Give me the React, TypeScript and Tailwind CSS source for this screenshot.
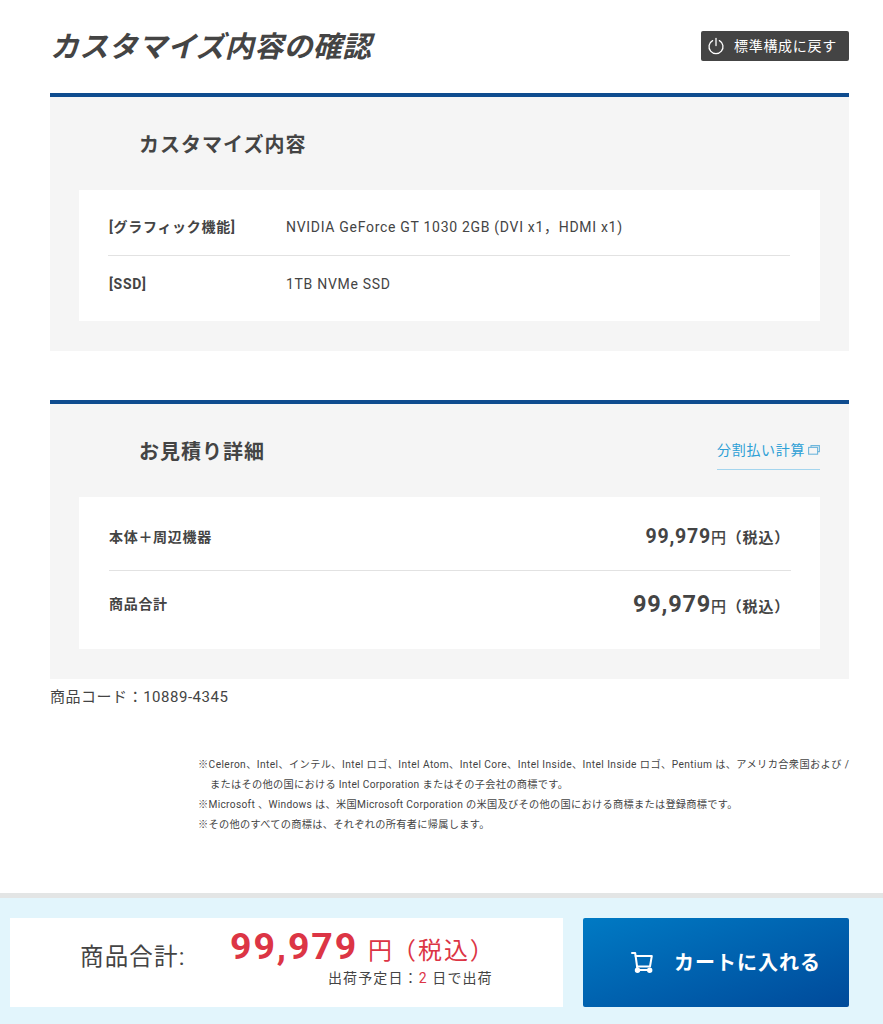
import React from "react";

function PowerIcon() {
  return (
    <svg width="18" height="18" viewBox="0 0 18 18" fill="none" stroke="#fff" strokeWidth="1.3" strokeLinecap="round">
      <path d="M5.6 3.6a7 7 0 1 0 6.8 0" />
      <path d="M9 1.5v7" />
    </svg>
  );
}

function CartIcon() {
  return (
    <svg width="22" height="21" viewBox="0 0 22 21" fill="none" stroke="#fff" strokeWidth="2" strokeLinejoin="round" strokeLinecap="round" className="shrink-0">
      <path d="M1 1h3.2l2.3 16.5" />
      <path d="M4.6 4h16.2l-1.8 10.5H6" />
      <path d="M6.5 18h12.5" />
      <circle cx="6.5" cy="18.2" r="1.7" fill="#fff" />
      <circle cx="18.7" cy="18.2" r="1.7" fill="#fff" />
    </svg>
  );
}

function WindowIcon() {
  return (
    <svg width="12" height="10" viewBox="0 0 12 10" fill="none" stroke="#6fb6dc" strokeWidth="1.1">
      <path d="M3 2.2V.6h8.4v6H9.6" />
      <rect x="0.6" y="2.4" width="9" height="6.8" />
    </svg>
  );
}

function Price({ value, big }: { value: string; big?: boolean }) {
  return (
    <div className="flex items-baseline font-bold tracking-[0.05em] text-[#444] whitespace-nowrap pt-[2px] pr-[1px]">
      <span className={big ? "text-[23.5px] leading-none" : "text-[19.5px] leading-none"}>{value}</span>
      <span className="text-[15px] font-medium">円</span>
      <span className="text-[15px] font-bold">（税込）</span>
    </div>
  );
}

export default function App() {
  return (
    <div className="w-[883px] h-[1024px] overflow-hidden bg-white text-[#444] flex flex-col font-['Roboto','Noto_Sans_CJK_JP',sans-serif]">
      <div className="pl-[50px] pr-[34px] flex flex-col">
        <div className="h-[93px] flex items-start justify-between">
          <h1 className="mt-[27px] text-[29px] leading-[40px] font-bold italic tracking-[0.01em] text-[#444]">カスタマイズ内容の確認</h1>
          <button className="mt-[31px] w-[148px] h-[30px] bg-[#444] rounded-[2px] flex items-center pl-[6px] gap-[9px] text-white text-[14px] tracking-[0.05em]">
            <PowerIcon />
            <span>標準構成に戻す</span>
          </button>
        </div>

        <section className="border-t-[4px] border-[#0f4c8f] bg-[#f5f5f5] h-[258px] px-[29px] pt-[33px]">
          <h2 className="pl-[60px] text-[20px] leading-[30px] font-bold tracking-[0.05em] h-[60px]">カスタマイズ内容</h2>
          <div className="bg-white h-[131px] pl-[29px] pr-[30px] pt-[9px]">
            <div className="h-[57px] pt-[1px] flex items-center border-b border-[#e2e2e2] text-[14px] tracking-[0.05em]">
              <span className="w-[178px] pl-[1px] font-bold">[グラフィック機能]</span>
              <span>NVIDIA GeForce GT 1030 2GB (DVI x1，HDMI x1)</span>
            </div>
            <div className="h-[56px] flex items-center text-[14px] tracking-[0.05em]">
              <span className="w-[178px] pl-[1px] font-bold">[SSD]</span>
              <span>1TB NVMe SSD</span>
            </div>
          </div>
        </section>

        <section className="mt-[49px] border-t-[4px] border-[#0f4c8f] bg-[#f5f5f5] h-[279px] px-[29px] pt-[33px]">
          <div className="h-[60px] flex items-start justify-between">
            <h2 className="pl-[60px] text-[20px] leading-[30px] font-bold tracking-[0.05em]">お見積り詳細</h2>
            <a className="w-[103px] h-[33px] border-b-[1.5px] border-[#a4d5ee] flex items-start gap-[3px] text-[14px] leading-[26px] tracking-[0.05em] text-[#2d9fd6] whitespace-nowrap">
              <span>分割払い計算</span>
              <span className="mt-[8px] shrink-0"><WindowIcon /></span>
            </a>
          </div>
          <div className="bg-white h-[152px] pl-[30px] pr-[29px] pt-[7px]">
            <div className="h-[67px] flex items-center justify-between border-b border-[#e2e2e2]">
              <span className="font-bold text-[14px] tracking-[0.05em]">本体＋周辺機器</span>
              <Price value="99,979" />
            </div>
            <div className="h-[67px] flex items-center justify-between">
              <span className="font-bold text-[14px] tracking-[0.05em]">商品合計</span>
              <Price value="99,979" big />
            </div>
          </div>
        </section>

        <p className="mt-[7px] text-[15px] leading-[22px] tracking-[0.035em] text-[#444]">商品コード：10889-4345</p>

        <div className="mt-[47px] ml-[148px] text-[10.2px] leading-[20px] tracking-[0.03em] text-[#444] whitespace-nowrap">
          <p className="tracking-[0.04em]">※Celeron、Intel、インテル、Intel ロゴ、Intel Atom、Intel Core、Intel Inside、Intel Inside ロゴ、Pentium は、アメリカ合衆国および /</p>
          <p className="pl-[12px]">またはその他の国における Intel Corporation またはその子会社の商標です。</p>
          <p>※Microsoft 、Windows は、米国Microsoft Corporation の米国及びその他の国における商標または登録商標です。</p>
          <p>※その他のすべての商標は、それぞれの所有者に帰属します。</p>
        </div>
      </div>

      <footer className="mt-[58px] border-t-[5px] border-[#e3e5e5] bg-[#e2f5fc] h-[131px] pl-[10px] pr-[34px] pt-[20px] flex gap-[20px] items-start">
        <div className="w-[553px] h-[89px] bg-white flex items-start pl-[70px]">
          <span className="mt-[24px] text-[23.5px] leading-[30px] tracking-[0.05em] w-[150px] whitespace-nowrap">商品合計:</span>
          <div className="flex flex-col items-end">
            <div className="flex items-baseline text-[#dc3545] mt-[6px] whitespace-nowrap">
              <span className="text-[37.5px] leading-[44px] font-bold tracking-[0.05em]">99,979</span>
              <span className="ml-[10px] text-[24px]">円</span>
              <span className="text-[24px] tracking-[0.08em]">（税込）</span>
            </div>
            <div className="text-[14px] leading-[18px] tracking-[0.08em] mr-[3px] whitespace-nowrap">
              出荷予定日：<span className="text-[#dc3545]">2</span> 日で出荷
            </div>
          </div>
        </div>
        <button className="w-[266px] h-[89px] rounded-[2px] bg-gradient-to-br from-[#007ac4] to-[#004a9a] flex items-center pl-[48px] gap-[21px] text-white text-[20px] font-bold tracking-[0.05em]">
          <CartIcon />
          <span>カートに入れる</span>
        </button>
      </footer>
    </div>
  );
}
